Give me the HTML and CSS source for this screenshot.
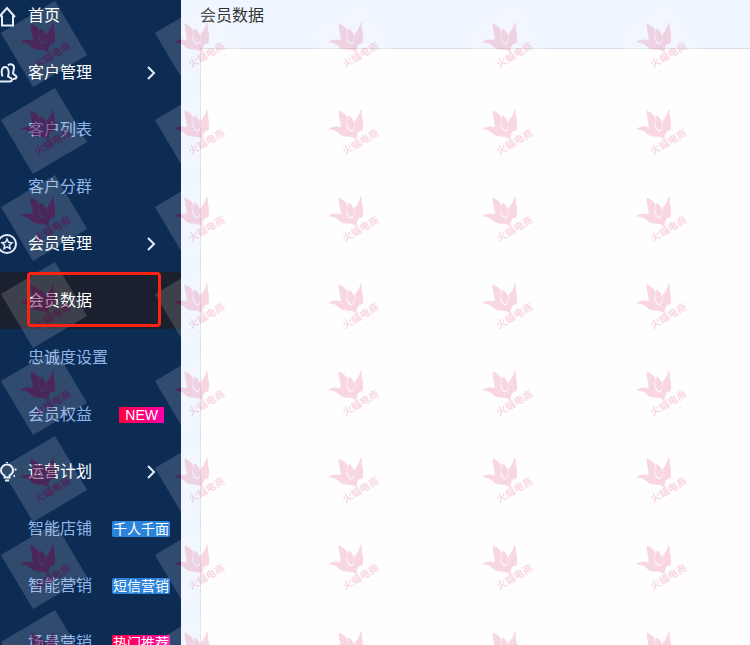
FILE: index.html
```html
<!DOCTYPE html>
<html lang="zh-CN">
<head>
<meta charset="utf-8">
<meta name="viewport" content="width=device-width, initial-scale=1">
<title>会员数据</title>
<link rel="stylesheet" href="styles.css">
</head>
<body>
<div class="app">
  <nav class="sidebar" aria-label="主导航">
    <ul class="menu">
      <li><a class="item group" href="#">
        <svg class="icon" viewBox="0 0 20 20"><path d="M0 11 8 2l8 9M3 9.500V19.500H14V9.500"/></svg>
        <span>首页</span></a></li>
      <li><a class="item group" href="#">
        <svg class="icon" viewBox="0 0 20 20"><path d="M9 2.500c2-2 6-1.500 6 2 0 2.500-1 4-1 6 1 1.500 3.500 1.500 3.500 3.500 0 1.500-1.500 2-3.500 2M3.500 13.500C2 9 2.500 4 6 4s4.500 5 3 9.500c1 1 4 1 4 3 0 1.500-1 2-2.500 2H0"/></svg>
        <span>客户管理</span>
        <svg class="chevron" viewBox="0 0 10 14"><path d="m2 1 6 6-6 6"/></svg></a></li>
      <li><a class="item" href="#"><span>客户列表</span></a></li>
      <li><a class="item" href="#"><span>客户分群</span></a></li>
      <li><a class="item group" href="#">
        <svg class="icon" viewBox="0 0 20 20"><circle cx="8" cy="10" r="9"/><path d="m8 5 1.500 3.300 3.500.4-2.600 2.400.7 3.500L8 12.900l-3.100 1.700.7-3.500L3 8.700l3.500-.4z"/></svg>
        <span>会员管理</span>
        <svg class="chevron" viewBox="0 0 10 14"><path d="m2 1 6 6-6 6"/></svg></a></li>
      <li><a class="item active" href="#" aria-current="page"><span>会员数据</span></a></li>
      <li><a class="item" href="#"><span>忠诚度设置</span></a></li>
      <li><a class="item" href="#"><span>会员权益</span><b class="tag new">NEW</b></a></li>
      <li><a class="item group" href="#">
        <svg class="icon" viewBox="0 0 20 20"><path d="M5.500 15.500v-2C3 12 2 10.500 2 8.500a6 6 0 0 1 12 0c0 2-1 3.500-3.500 5v2zM6 18.500h4M8 0v1M-1 7.500h1M15.500 7.500h2M14.500 14h1.500M0 14h1"/></svg>
        <span>运营计划</span>
        <svg class="chevron" viewBox="0 0 10 14"><path d="m2 1 6 6-6 6"/></svg></a></li>
      <li><a class="item" href="#"><span>智能店铺</span><b class="tag">千人千面</b></a></li>
      <li><a class="item" href="#"><span>智能营销</span><b class="tag">短信营销</b></a></li>
      <li><a class="item" href="#"><span>场景营销</span><b class="tag hot">热门推荐</b></a></li>
    </ul>
  </nav>
  <main class="content">
    <h1 class="title">会员数据</h1>
    <section class="panel"></section>
  </main>
  <svg class="watermark" aria-hidden="true">
    <defs>
      <g id="logo">
        <path class="mark-flame" d="M21 42C26 39 30 40 33 41 34 36 31 31 31 24 35 26 39 28 39 32 37 37 38 42 43 45 47 43 48 39 47 34 50 31 52 27 53 23 53 31 56 37 54 43 50 43 48 47 48 52 43 47 37 51 32 47 28 43 25 42 21 42zM41 29C44 31 45 34 46 36 47 40 45 42 43 43 39 40 39 35 41 29z"/>
        <text class="mark-text" transform="translate(37 68) rotate(-30)">火蝠电商</text>
        <path class="mark-line" d="M40 73 72 55"/>
      </g>
      <pattern id="mark-dark" width="154" height="87" patternUnits="userSpaceOnUse">
        <path class="mark-card" d="M55 1 87 55 33 87 1 33z"/>
        <use href="#logo" class="ink-dark"/>
      </pattern>
      <pattern id="mark-light" width="154" height="87" patternUnits="userSpaceOnUse">
        <path class="mark-card" d="M55 1 87 55 33 87 1 33z"/>
        <use href="#logo" class="ink-light"/>
      </pattern>
    </defs>
    <rect width="181" height="100%" fill="url(#mark-dark)"/>
    <rect x="181" width="100%" height="100%" fill="url(#mark-light)"/>
  </svg>
  <div class="highlight"></div>
</div>
</body>
</html>
```
FILE: styles.css
```css
* {
  box-sizing: border-box;
}

body {
  margin: 0;
  font-family: "Liberation Sans", "Noto Sans CJK SC", sans-serif;
  font-size: 16px;
  color: #333;
}

.app {
  position: relative;
  display: flex;
  height: 100vh;
  overflow: hidden;
  background: #f0f6ff;
}

.sidebar {
  flex: 0 0 181px;
  overflow: hidden;
  background: #0c2c54;
}

.menu {
  margin: -13px 0 0;
  padding: 0;
  list-style: none;
}

.item {
  position: relative;
  display: flex;
  align-items: center;
  height: 57px;
  padding: 0 11px 0 28px;
  color: #8eb4ea;
  line-height: 24px;
  text-decoration: none;
  white-space: nowrap;
}

.group,
.active {
  color: #fff;
}

.active {
  background: #1a202d;
}

.icon {
  position: absolute;
  left: -1px;
  width: 20px;
  height: 20px;
  overflow: visible;
}

.icon,
.chevron {
  fill: none;
  stroke: #e6edf8;
  stroke-width: 2;
}

.chevron {
  width: 10px;
  height: 14px;
  margin: 0 14px 0 auto;
}

.icon circle + path {
  stroke-width: 1.5;
}

.tag {
  margin-left: auto;
  padding: 0 1px;
  border-radius: 2px;
  background: #2b83dc;
  color: #fff;
  font-size: 14px;
  font-weight: 400;
  line-height: 16px;
}

.new {
  margin-right: 6px;
  padding: 0 6px;
  border-radius: 0;
  background: linear-gradient(90deg, #ff0040, #f0a);
}

.hot {
  background: linear-gradient(90deg, #ff0040, #f0a);
}

.content {
  display: flex;
  flex: 1;
  flex-direction: column;
  padding-left: 19px;
}

.title {
  height: 48px;
  margin: 0;
  padding-top: 4px;
  font-size: 16px;
  font-weight: 400;
  line-height: 24px;
}

.panel {
  flex: 1;
  border: solid #d9e0ec;
  border-width: 1px 0 0 1px;
  background: #fefefe;
}

.watermark {
  position: absolute;
  inset: 0;
  width: 100%;
  height: 100%;
  pointer-events: none;
}

.mark-card {
  fill: #fff;
  opacity: 0.15;
}

.ink-dark {
  fill: #640046;
  stroke: #640046;
  opacity: 0.5;
}

.ink-light {
  fill: #dc1450;
  stroke: #dc1450;
  opacity: 0.17;
}

#logo .mark-flame {
  stroke-width: 1;
}

.mark-text {
  stroke: none;
  font-size: 10px;
  font-weight: 700;
}

#logo .mark-line {
  stroke-width: 1;
  stroke-dasharray: 1 1;
  opacity: 0.4;
}

.highlight {
  position: absolute;
  top: 272px;
  left: 27px;
  width: 134px;
  height: 55px;
  border: 3px solid #fa2314;
  border-radius: 4px;
  pointer-events: none;
}
```
